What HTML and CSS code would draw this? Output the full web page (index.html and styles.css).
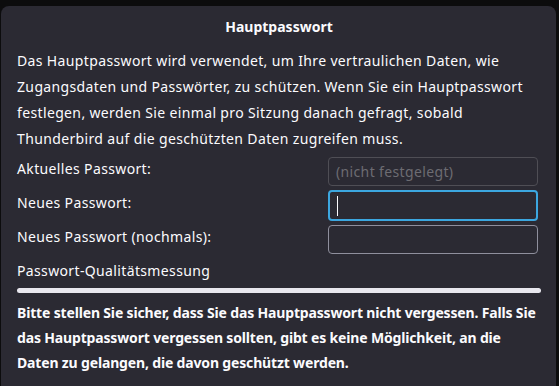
FILE: index.html
```html
<!DOCTYPE html>
<html lang="de">
<head>
<meta charset="utf-8">
<link rel="stylesheet" href="styles.css">
</head>
<body>
<div class="dialog">
  <div class="title">Hauptpasswort</div>
  <p class="intro">Das Hauptpasswort wird verwendet, um Ihre vertraulichen Daten, wie Zugangsdaten und Passwörter, zu schützen. Wenn Sie ein Hauptpasswort festlegen, werden Sie einmal pro Sitzung danach gefragt, sobald Thunderbird auf die geschützten Daten zugreifen muss.</p>
  <div class="form">
    <label class="label">Aktuelles Passwort:</label>
    <div class="field disabled"><span class="placeholder">(nicht festgelegt)</span></div>
    <label class="label">Neues Passwort:</label>
    <div class="field focused"><span class="caret"></span></div>
    <label class="label">Neues Passwort (nochmals):</label>
    <div class="field"></div>
  </div>
  <div class="meter-label">Passwort-Qualitätsmessung</div>
  <div class="meter"></div>
  <p class="warning">Bitte stellen Sie sicher, dass Sie das Hauptpasswort nicht vergessen. Falls Sie<br>das Hauptpasswort vergessen sollten, gibt es keine Möglichkeit, an die<br>Daten zu gelangen, die davon geschützt werden.</p>
</div>
</body>
</html>
```
FILE: styles.css
```css
html, body {
  margin: 0;
  padding: 0;
  background: #0c0c0d;
  height: 100%;
  overflow: hidden;
}
body {
  font-family: "Noto Sans", "Open Sans", sans-serif;
  font-size: 14px;
  color: #fbfbfe;
  padding: 6px 3px 0 1px;
  box-sizing: border-box;
}
.dialog {
  background: #2b2a33;
  border-radius: 8px 8px 0 0;
  padding: 11px 12px 20px 16px;
  min-height: 400px;
}
.title {
  text-align: center;
  font-weight: bold;
  line-height: 20px;
  padding-right: 3px;
}
.intro {
  margin: 11px 0 0 0;
  line-height: 26px;
  letter-spacing: 0.36px;
}
.form {
  display: grid;
  grid-template-columns: 1fr 210px;
  row-gap: 4px;
  align-items: center;
  padding-right: 6px;
  margin-top: 5px;
  letter-spacing: 0.36px;
}
.label {
  line-height: 20px;
  position: relative;
  top: -3px;
}
.field {
  height: 29px;
  box-sizing: border-box;
  border: 1px solid #8f8f9d;
  border-radius: 4px;
  background: #2b2a33;
  display: flex;
  align-items: center;
  padding-left: 7px;
}
.field.disabled {
  border-color: #4f4e55;
}
.field.focused {
  height: 31px;
  border: 2px solid #3ca7e0;
  padding-left: 6px;
}
.placeholder {
  color: #6d6c72;
}
.caret {
  width: 1px;
  height: 20px;
  background: #fbfbfe;
  margin-left: 1px;
}
.meter-label {
  line-height: 20px;
  margin-top: 7px;
  letter-spacing: 0.36px;
}
.meter {
  height: 5px;
  background: #e8e7ee;
  border-radius: 3px;
  margin: 7px 3px 0 0;
}
.warning {
  margin: 7px 0 0 0;
  font-weight: bold;
  line-height: 25px;
  white-space: nowrap;
  letter-spacing: -0.16px;
}
```
